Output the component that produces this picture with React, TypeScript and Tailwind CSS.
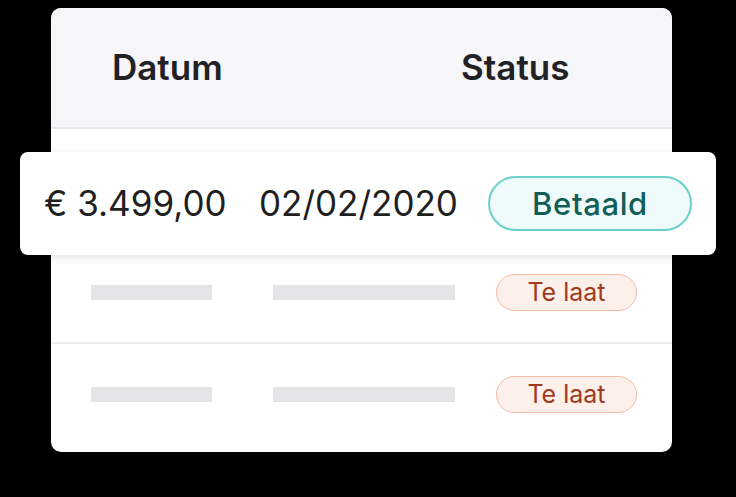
const rows = [{ id: 2 }, { id: 3 }];

const LateBadge = () => (
  <span className="ml-[41px] flex h-[37px] w-[141px] items-center justify-center rounded-full border border-[#f6b9a4] bg-[#fdefe9] text-[25px] leading-none text-[#a13a1a]">
    Te laat
  </span>
);

export default function App() {
  return (
    <div
      className="relative h-[497px] w-[736px] overflow-hidden bg-black pt-[8px]"
      style={{ fontFamily: "Inter, 'Noto Sans', sans-serif" }}
    >
      <div className="ml-[51px] flex h-[444px] w-[621px] flex-col overflow-hidden rounded-[10px] bg-white">
        <div className="flex h-[121px] shrink-0 items-center border-b-2 border-[#e6e6ea] bg-[#f6f6f8] pl-[61px] text-[35px] font-semibold text-[#222226]">
          <span className="w-[349px]">Datum</span>
          <span>Status</span>
        </div>
        <div className="h-[114px] shrink-0" />
        {rows.map((r, i) => (
          <div
            key={r.id}
            className={`flex h-[101px] shrink-0 items-center ${i === 0 ? "border-b-2 border-[#ececef]" : ""}`}
          >
            <span className="ml-[40px] h-[15px] w-[121px] bg-[#e4e4e6]" />
            <span className="ml-[61px] h-[15px] w-[182px] bg-[#e4e4e6]" />
            <LateBadge />
          </div>
        ))}
      </div>

      <div className="absolute left-[20px] top-[152px] flex h-[103px] w-[696px] items-center rounded-[8px] bg-white pl-[24px] text-[35px] text-[#1f1f22] shadow-[0_2px_8px_rgba(0,0,0,0.12)]">
        <span className="w-[215px]">€ 3.499,00</span>
        <span className="w-[229px]">02/02/2020</span>
        <span className="flex h-[55px] w-[204px] items-center justify-center rounded-full border-2 border-[#6ad0cb] bg-[#effafa] text-[31px] font-medium leading-none tracking-[0.02em] text-[#115e59]">
          Betaald
        </span>
      </div>
    </div>
  );
}
